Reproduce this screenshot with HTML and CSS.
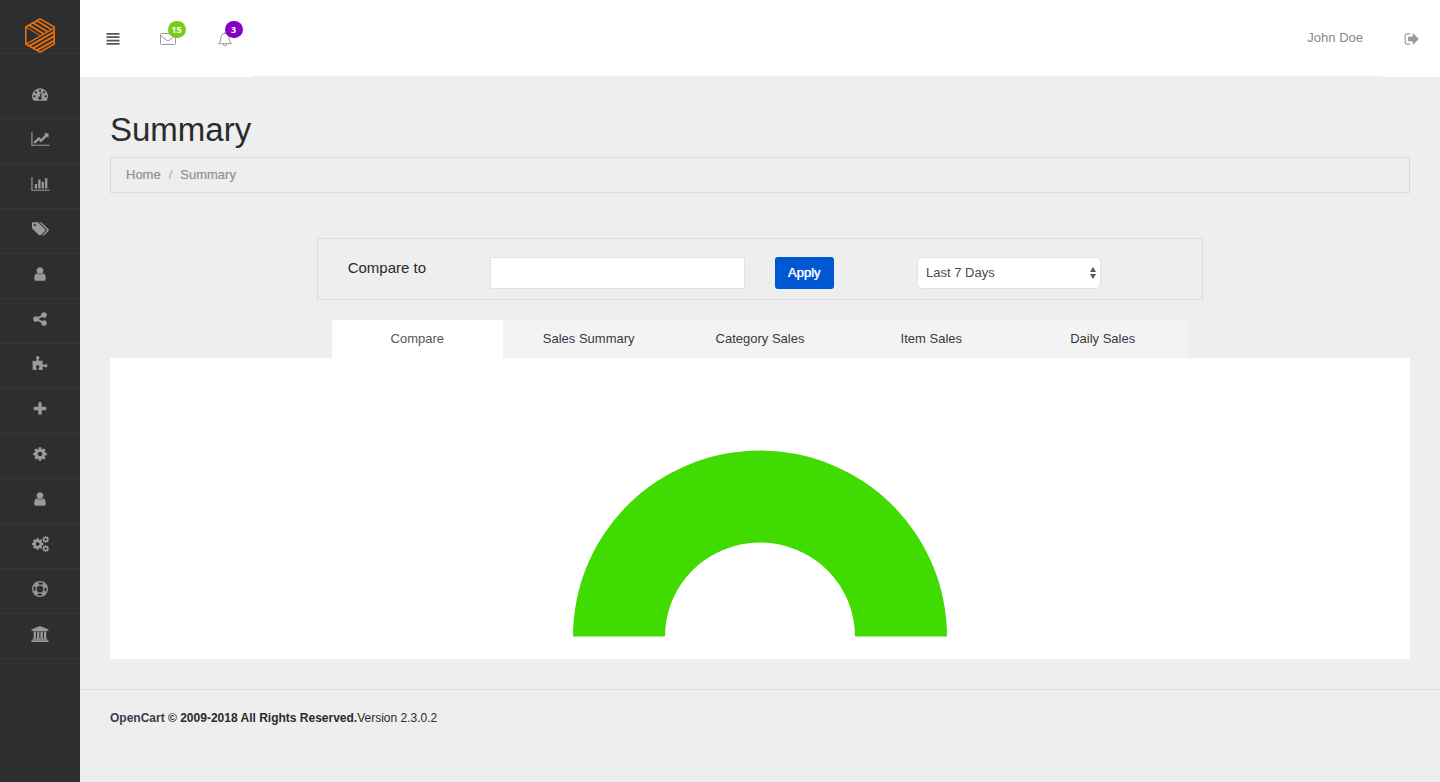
FILE: index.html
```html
<!DOCTYPE html>
<html lang="en">
<head>
<meta charset="utf-8">
<title>Summary</title>
<link rel="stylesheet" href="styles.css">
</head>
<body>
<svg class="defs" aria-hidden="true">
  <symbol id="cog" viewBox="0 0 1792 1792"><path d="M1152 896q0-106-75-181t-181-75-181 75-75 181 75 181 181 75 181-75 75-181zm512-109v222q0 12-8 23t-20 13l-185 28q-19 54-39 91 35 50 107 138 10 12 10 25t-9 23q-27 37-99 108t-94 71q-12 0-26-9l-138-108q-44 23-91 38-16 136-29 186-7 28-36 28h-222q-14 0-24.500-8.500t-11.500-21.500l-28-184q-49-16-90-37l-141 107q-10 9-25 9-14 0-25-11-126-114-165-168-7-10-7-23 0-12 8-23 15-21 51-66.500t54-70.500q-27-50-41-99l-183-27q-13-2-21-12.500t-8-23.500v-222q0-12 8-23t19-13l186-28q14-46 39-92-40-57-107-138-10-12-10-24 0-10 9-23 26-36 98.500-107.500t94.500-71.500q13 0 26 10l138 107q44-23 91-38 16-136 29-186 7-28 36-28h222q14 0 24.500 8.500t11.500 21.500l28 184q49 16 90 37l142-107q9-9 24-9 13 0 25 10 129 119 165 170 7 8 7 22 0 12-8 23-15 21-51 66.500t-54 70.500q26 50 41 98l183 28q13 2 21 12.500t8 23.500z"/></symbol>
  <symbol id="user" viewBox="0 0 1792 1792"><path d="M1536 1399q0 109-62.500 187t-150.500 78h-854q-88 0-150.500-78t-62.500-187q0-85 8.500-160.500t31.500-152 58.500-131 94-89 134.500-34.500q131 128 313 128t313-128q76 0 134.500 34.500t94 89 58.500 131 31.500 152 8.500 160.500zm-256-887q0 159-112.500 271.500t-271.500 112.500-271.500-112.500-112.500-271.500 112.500-271.500 271.500-112.500 271.500 112.500 112.500 271.500z"/></symbol>
</svg>
<aside class="sidebar">
  <a class="logo" href="#" aria-label="Home">
    <svg viewBox="0 0 30 35" width="30" height="35" fill="none" stroke="#ea6f0a">
      <clipPath id="upper"><path d="M15 0L30 9L15 18L0 9z"/></clipPath>
      <clipPath id="lower"><path d="M0 26L30 9V26L15 35z"/></clipPath>
      <g clip-path="url(#upper)" stroke-width="1.9"><path d="M0 9l18 11M3.700 6.700l18 11M7.500 4.500l18 11M11.200 2.200l18 11"/></g>
      <g clip-path="url(#lower)" stroke-width="1.9"><path d="M0 26.500L30 9.500M3.700 28.300L30 13.400M7.500 30.500L30 17.700M11.200 32.700L30 22.100"/></g>
      <path d="M.8 26V9L15 .8L29.200 9V26L15 34.200z" stroke-width="1.600"/>
    </svg>
  </a>
  <nav class="menu" aria-label="Main">
    <a href="#" aria-label="Dashboard"><svg viewBox="0 0 1792 1792"><path d="M384 1152q0-53-37.500-90.500t-90.500-37.500-90.500 37.500-37.500 90.500 37.500 90.500 90.500 37.500 90.500-37.500 37.500-90.500zm192-448q0-53-37.500-90.500t-90.500-37.500-90.500 37.500-37.500 90.500 37.500 90.500 90.500 37.500 90.500-37.500 37.500-90.500zm428 481l101-382q6-26-7.500-48.500t-38.500-29.500-48 6.500-30 39.500l-101 382q-60 5-107 43.500t-63 98.500q-20 77 20 146t117 89 146-20 89-117q16-60-6-117t-72-91zm660-33q0-53-37.500-90.500t-90.500-37.500-90.500 37.500-37.500 90.500 37.500 90.500 90.500 37.500 90.500-37.500 37.500-90.500zm-640-640q0-53-37.500-90.500t-90.500-37.500-90.500 37.500-37.500 90.500 37.500 90.500 90.500 37.500 90.500-37.500 37.500-90.500zm448 192q0-53-37.500-90.500t-90.500-37.500-90.500 37.500-37.500 90.500 37.500 90.500 90.500 37.500 90.500-37.500 37.500-90.500zm320 448q0 261-141 483-19 29-54 29h-1402q-35 0-54-29-141-221-141-483 0-182 71-348t191-286 286-191 348-71 348 71 286 191 191 286 71 348z"/></svg></a>
    <a href="#" aria-label="Trends"><svg viewBox="0 0 2048 1792" class="wide"><path d="M2048 1536v128h-2048v-1536h128v1408h1920zm-128-1248v435q0 21-19.500 29.500t-35.500-7.500l-121-121-633 633q-10 10-23 10t-23-10l-233-233-416 416-192-192 585-585q10-10 23-10t23 10l233 233 464-464-121-121q-16-16-7.500-35.500t29.500-19.500h435q14 0 23 9t9 23z"/></svg></a>
    <a href="#" aria-label="Reports"><svg viewBox="0 0 2048 1792" class="wide"><path d="M640 896v512h-256v-512h256zm384-512v1024h-256v-1024h256zm1024 1152v128h-2048v-1536h128v1408h1920zm-640-896v768h-256v-768h256zm384-384v1152h-256v-1152h256z"/></svg></a>
    <a href="#" aria-label="Catalog"><svg viewBox="0 0 2048 1792" class="wide"><path transform="translate(60 0)" d="M448 448q0-53-37.500-90.500t-90.500-37.500-90.500 37.500-37.500 90.500 37.500 90.500 90.500 37.500 90.500-37.500 37.500-90.500zm1067 576q0 53-37 90l-491 492q-39 37-91 37-53 0-90-37l-715-716q-38-37-64.500-101t-26.500-117v-416q0-52 38-90t90-38h416q53 0 117 26.500t102 64.500l715 714q37 39 37 91zm384 0q0 53-37 90l-491 492q-39 37-91 37-36 0-59-14t-53-45l470-470q37-37 37-90 0-52-37-91l-715-714q-38-38-102-64.500t-117-26.500h224q53 0 117 26.500t102 64.500l715 714q37 39 37 91z"/></svg></a>
    <a href="#" aria-label="Customers"><svg><use href="#user"/></svg></a>
    <a href="#" aria-label="Marketing"><svg viewBox="0 0 1792 1792"><path d="M1344 1024q133 0 226.500 93.500t93.500 226.500-93.500 226.500-226.500 93.500-226.500-93.500-93.500-226.500q0-12 2-34l-360-180q-92 86-218 86-133 0-226.500-93.500t-93.500-226.500 93.500-226.500 226.500-93.500q126 0 218 86l360-180q-2-22-2-34 0-133 93.500-226.500t226.500-93.500 226.500 93.500 93.500 226.500-93.500 226.500-226.500 93.500q-126 0-218-86l-360 180q2 22 2 34t-2 34l360 180q92-86 218-86z"/></svg></a>
    <a href="#" aria-label="Extensions"><svg viewBox="0 0 1792 1792"><path d="M1728 1098q0 81-44.500 135t-123.500 54q-41 0-77.500-17.500t-59-38-56.500-38-71-17.500q-110 0-110 124 0 39 16 115t15 115v5q-22 0-33 1-34 3-97.500 11.500t-115.500 13.500-98 5q-61 0-103-26.500t-42-83.500q0-37 17.500-71t38-56.500 38-59 17.500-77.500q0-79-54-123.500t-135-44.500q-84 0-143 45.500t-59 127.500q0 43 15 83t33.500 64.500 33.500 53 15 50.500q0 45-46 89-37 35-117 35-95 0-245-24-9-2-27.500-4t-27.500-4l-13-2q-1 0-3-1-2 0-2-1v-1024q2 1 17.500 3.500t34 5 21.500 3.500q150 24 245 24 80 0 117-35 46-44 46-89 0-22-15-50.500t-33.500-53-33.500-64.500-15-83q0-82 59-127.500t144-45.500q80 0 134 44.500t54 123.500q0 41-17.500 77.500t-38 59-38 56.500-17.500 71q0 57 42 83.500t103 26.500q64 0 180-15t163-17v2q-1 2-3.500 17.500t-5 34-3.500 21.500q-24 150-24 245 0 80 35 117 44 46 89 46 22 0 50.500-15t53-33.500 64.500-33.500 83-15q82 0 127.500 59t45.500 143z"/></svg></a>
    <a href="#" aria-label="Add"><svg viewBox="0 0 1792 1792"><path d="M1600 736v192q0 40-28 68t-68 28h-416v416q0 40-28 68t-68 28h-192q-40 0-68-28t-28-68v-416h-416q-40 0-68-28t-28-68v-192q0-40 28-68t68-28h416v-416q0-40 28-68t68-28h192q40 0 68 28t28 68v416h416q40 0 68 28t28 68z"/></svg></a>
    <a href="#" aria-label="System"><svg><use href="#cog"/></svg></a>
    <a href="#" aria-label="Users"><svg><use href="#user"/></svg></a>
    <a href="#" aria-label="Tools"><svg viewBox="0 0 1920 1792" class="wide"><use href="#cog" x="-107" y="149" width="1493" height="1493"/><use href="#cog" x="1090" y="-64" width="896" height="896"/><use href="#cog" x="1090" y="960" width="896" height="896"/></svg></a>
    <a href="#" aria-label="Support"><svg viewBox="0 0 1792 1792" fill="none" stroke="currentColor"><circle cx="896" cy="896" r="826" stroke-width="140"/><circle cx="896" cy="896" r="448" stroke-width="140"/><circle cx="896" cy="896" r="640" stroke-width="270" stroke-dasharray="520 485.300" stroke-dashoffset="-242"/></svg></a>
    <a href="#" aria-label="Bank"><svg viewBox="0 0 2048 1792" class="wide"><path d="M960 0l960 384v128h-128q0 26-20.500 45t-48.500 19h-1526q-28 0-48.500-19t-20.500-45h-128v-128zm-704 640h256v768h128v-768h256v768h128v-768h256v768h128v-768h256v768h59q28 0 48.500 19t20.500 45v64h-1664v-64q0-26 20.500-45t48.500-19h59v-768zm1595 960q28 0 48.500 19t20.500 45v128h-1920v-128q0-26 20.500-45t48.500-19h1782z"/></svg></a>
  </nav>
</aside>
<div class="page">
  <header class="topbar">
    <button class="tool dark" type="button" aria-label="Toggle menu"><svg viewBox="0 0 16 16"><path d="M1.500 2h13v1.700h-13zM1.500 5.300h13v1.700h-13zM1.500 8.700h13v1.700h-13zM1.500 12h13v1.700h-13z"/></svg></button>
    <button class="tool" type="button" aria-label="Messages"><span class="holder"><svg viewBox="0 0 16 16" fill="none" stroke="currentColor"><rect x=".5" y="2.500" width="15" height="11" rx="1.200"/><path d="M.8 4.500C3 6.500 5 8 6.500 9.200Q8 10.300 9.500 9.200C11 8 13 6.500 15.200 4.500"/></svg><span class="badge green">15</span></span></button>
    <button class="tool" type="button" aria-label="Notifications"><span class="holder"><svg viewBox="0 0 16 16" fill="none" stroke="currentColor"><path d="M1.600 12.700Q4 10.500 4 6.300Q4.200 2.500 8 2.300Q11.800 2.500 12 6.300Q12 10.500 14.400 12.700zM8 2.300V1"/><path d="M6.300 13.200a1.700 1.700 0 0 0 3.400 0"/></svg><span class="badge purple">3</span></span></button>
    <div class="account"><a href="#">John Doe</a></div>
    <a class="tool" href="#" aria-label="Log out"><svg viewBox="0 0 1792 1792"><path d="M704 1440q0 4 1 20t.5 26.500-3 23.500-10 19.500-20.500 6.500h-320q-119 0-203.500-84.500t-84.500-203.500v-704q0-119 84.500-203.500t203.500-84.500h320q13 0 22.500 9.500t9.500 22.500q0 4 1 20t.5 26.500-3 23.500-10 19.500-20.500 6.500h-320q-66 0-113 47t-47 113v704q0 66 47 113t113 47h312l11.500 1 11.500 3 8 5.500 7 9 2 13.500zm928-544q0 26-19 45l-544 544q-19 19-45 19t-45-19-19-45v-288h-448q-26 0-45-19t-19-45v-384q0-26 19-45t45-19h448v-288q0-26 19-45t45-19 45 19l544 544q19 19 19 45z"/></svg></a>
  </header>
  <main class="content">
    <h1>Summary</h1>
    <nav class="crumbs" aria-label="Breadcrumb"><a href="#">Home</a><span class="slash">/</span><a href="#">Summary</a></nav>
    <form class="filter">
      <label for="compare">Compare to</label>
      <div class="field"><input id="compare" type="text"></div>
      <div><button class="apply" type="button">Apply</button></div>
      <div class="picker">
        <select aria-label="Period"><option>Last 7 Days</option></select>
        <svg viewBox="0 0 6 12" width="6" height="12" aria-hidden="true"><path d="M3 0l3 5H0zM3 12l3-5H0z"/></svg>
      </div>
    </form>
    <div class="tabs" role="tablist">
      <button type="button" role="tab" aria-selected="true">Compare</button>
      <button type="button" role="tab" aria-selected="false">Sales Summary</button>
      <button type="button" role="tab" aria-selected="false">Category Sales</button>
      <button type="button" role="tab" aria-selected="false">Item Sales</button>
      <button type="button" role="tab" aria-selected="false">Daily Sales</button>
    </div>
    <section class="panel">
      <svg viewBox="0 0 374 187" width="374" height="187" role="img" aria-label="Comparison chart"><path d="M0 186.500A187 186 0 0 1 374 186.500H282A95 94 0 0 0 92 186.500z" fill="#40db00"/></svg>
    </section>
  </main>
  <footer class="footer"><strong><a href="#">OpenCart</a> © 2009-2018 All Rights Reserved.</strong>Version 2.3.0.2</footer>
</div>
</body>
</html>
```
FILE: styles.css
```css
* { box-sizing: border-box; }
body {
  margin: 0;
  min-height: 100vh;
  display: flex;
  background: #eee;
  color: #292b2c;
  font: 13px/18px "Liberation Sans", Arial, sans-serif;
}
a { color: inherit; text-decoration: none; }
button, input, select { font: inherit; color: inherit; }
.defs { position: absolute; width: 0; height: 0; }

.sidebar { flex: 0 0 80px; background: #2d2e30; color: #999b9b; }
.logo {
  display: flex;
  justify-content: center;
  padding: 18px 0 0;
  height: 54px;
  border-bottom: 1px solid #36373a;
}
.menu { margin-top: 20px; }
.menu a {
  display: flex;
  justify-content: center;
  padding: 12px 0 16px;
  border-bottom: 1px solid #343539;
}
.menu svg { width: 16px; height: 16px; fill: currentColor; }
.menu svg[fill="none"] { fill: none; }
.menu svg.wide { width: 19px; }

.page { flex: 1; min-width: 0; }
.topbar { display: flex; color: #999; }
.tool {
  display: flex;
  justify-content: center;
  align-items: center;
  width: 57px;
  height: 77px;
  padding: 0;
  border: 0;
  background: #fff;
  color: #999;
}
.tool.dark { width: 59px; padding-left: 6px; color: #555; }
.tool svg { display: block; width: 16px; height: 16px; }
.tool svg:not([fill]) { fill: currentColor; }
.holder { position: relative; }
.badge {
  position: absolute;
  left: 8px;
  top: -10px;
  width: 18px;
  height: 17px;
  border-radius: 9px;
  color: #fff;
  font: bold 9px/17px "Open Sans", sans-serif;
  text-align: center;
}
.green { background: #78cd1b; }
.purple { background: #8500c3; }
.account {
  flex: 1;
  display: flex;
  justify-content: flex-end;
  align-items: center;
  padding-right: 20px;
  background: #fff;
  border-bottom: 1px solid #eee;
  color: #888;
}

.content { padding: 33px 30px 30px; }
h1 { margin: 0 0 7px; font-size: 33px; line-height: 40px; font-weight: 400; }
.crumbs {
  display: flex;
  gap: 8px;
  padding: 8px 15px;
  border: 1px solid #dcdcdc;
  color: #949494;
  text-shadow: 0 0 1px #bbb;
}
.slash { color: #bbb; }
.filter {
  display: grid;
  grid-template-columns: 142fr 285fr 142fr 184fr 101fr;
  width: calc((100% + 30px) * 2 / 3);
  margin: 45px auto 20px;
  padding: 18px 0 10px 30px;
  border: 1px solid #dcdcdc;
}
.filter label { font-size: 15px; line-height: 22px; }
.field { padding-right: 30px; }
.field input {
  display: block;
  width: 100%;
  height: 32px;
  padding: 0 8px;
  border: 1px solid #e2e2e2;
  background: #fff;
}
.apply {
  height: 32px;
  padding: 0 13px;
  border: 0;
  border-radius: 3px;
  background: #0057d2;
  color: #fff;
  text-shadow: 0 0 1px #fff;
}
.picker { position: relative; }
.picker select {
  appearance: none;
  display: block;
  width: 100%;
  height: 32px;
  padding: 0 8px;
  border: 1px solid #e2e2e2;
  border-radius: 5px;
  background: #fff;
  color: #4c4c4c;
}
.picker svg { position: absolute; right: 5px; top: 10px; fill: #555; pointer-events: none; }
.tabs { display: grid; grid-template-columns: repeat(5, 1fr); width: calc((100% + 30px) * 2 / 3 - 30px); margin: 0 auto; }
.tabs button { height: 38px; padding: 0; border: 0; background: #f3f3f3; color: #373a3c; }
.tabs button[aria-selected="true"] { background: #fff; color: #555; }
.panel { display: flex; justify-content: center; padding: 92px 20px 22px; background: #fff; }

.footer { padding: 19px 30px; border-top: 1px solid #dcdcdc; font-size: 12px; }
.footer a { color: #373e4a; }
```
